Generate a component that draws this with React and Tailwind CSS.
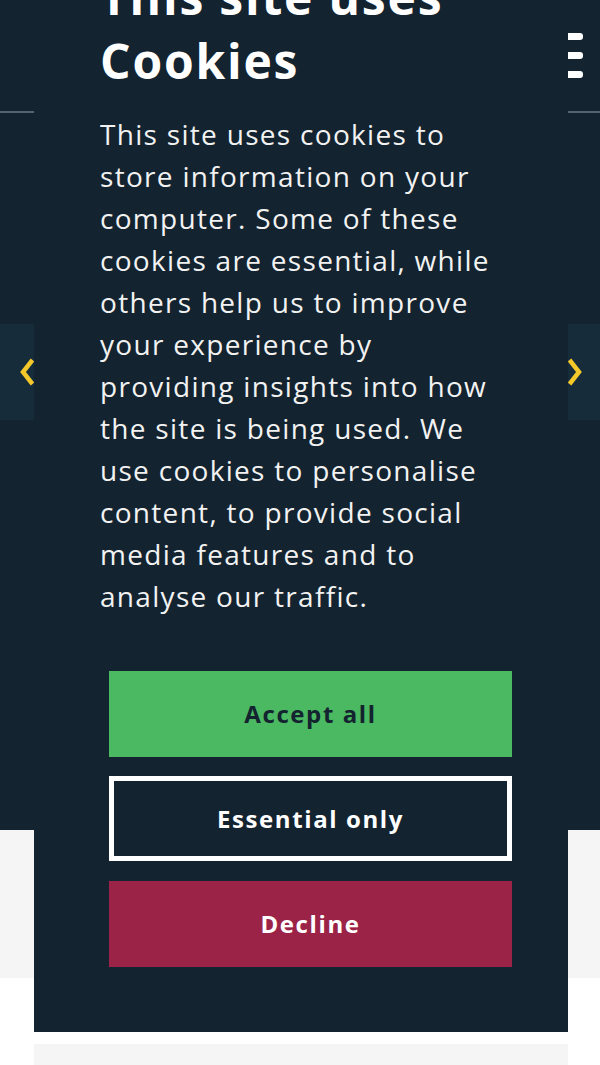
import React from "react";

const lines = [
  "This site uses cookies to",
  "store information on your",
  "computer. Some of these",
  "cookies are essential, while",
  "others help us to improve",
  "your experience by",
  "providing insights into how",
  "the site is being used. We",
  "use cookies to personalise",
  "content, to provide social",
  "media features and to",
  "analyse our traffic.",
];

function Chevron({ dir }) {
  return (
    <svg width="14" height="28" viewBox="0 0 14 28" fill="none">
      <path
        d={dir === "left" ? "M12.5 2 L3 14 L12.5 26" : "M1.5 2 L11 14 L1.5 26"}
        stroke="#f4c82b"
        strokeWidth="4.5"
        strokeLinejoin="miter"
      />
    </svg>
  );
}

export default function App() {
  return (
    <div className="min-h-screen bg-white font-['Open_Sans',sans-serif] relative overflow-hidden">
      {/* Header / hero */}
      <header className="bg-[#13232f] h-[830px]">
        <div className="h-[113px] border-b-2 border-[#56636d] flex flex-col items-end justify-start pt-[33px] pr-[17px] gap-[12px]">
          <span className="block w-[32px] h-[7px] bg-white rounded-r-[3px]" />
          <span className="block w-[32px] h-[7px] bg-white rounded-r-[3px]" />
          <span className="block w-[32px] h-[7px] bg-white rounded-r-[3px]" />
        </div>
        <div className="flex justify-between mt-[211px]">
          <div className="w-[34px] h-[96px] bg-[#162c3b] flex items-center justify-end">
            <Chevron dir="left" />
          </div>
          <div className="w-[32px] h-[96px] bg-[#162c3b] flex items-center justify-start">
            <Chevron dir="right" />
          </div>
        </div>
      </header>
      <section className="h-[148px] bg-[#f5f5f5]" />
      <section className="pt-[66px] pl-[34px] pr-[32px]">
        <div className="h-[21px] bg-[#f5f5f5]" />
      </section>

      {/* Cookie dialog */}
      <div className="fixed left-[34px] bottom-[33px] w-[534px] bg-[#13232f] pl-[66px] pr-[20px] pb-[65px]">
        <h2 className="text-[48px] leading-[64px] font-bold text-white tracking-[1.8px] pt-[3px]">
          This site uses
          <br />
          Cookies
        </h2>
        <p className="mt-[20px] text-[28px] leading-[42px] text-[#f2f2f2] tracking-[1.3px]">
          {lines.map((l) => (
            <span key={l} className="block whitespace-nowrap">
              {l}
            </span>
          ))}
        </p>
        <div className="mt-[54px] ml-[9px] w-[403px] flex flex-col">
          <button className="h-[86px] bg-[#4bb862] text-[#13232f] text-[24px] font-bold tracking-[1.6px]">
            Accept all
          </button>
          <button className="mt-[19px] h-[85px] border-[5px] border-white bg-[#13232f] text-white text-[24px] font-bold tracking-[1.6px]">
            Essential only
          </button>
          <button className="mt-[20px] h-[86px] bg-[#9b2347] text-white text-[24px] font-bold tracking-[1.6px]">
            Decline
          </button>
        </div>
      </div>
    </div>
  );
}
